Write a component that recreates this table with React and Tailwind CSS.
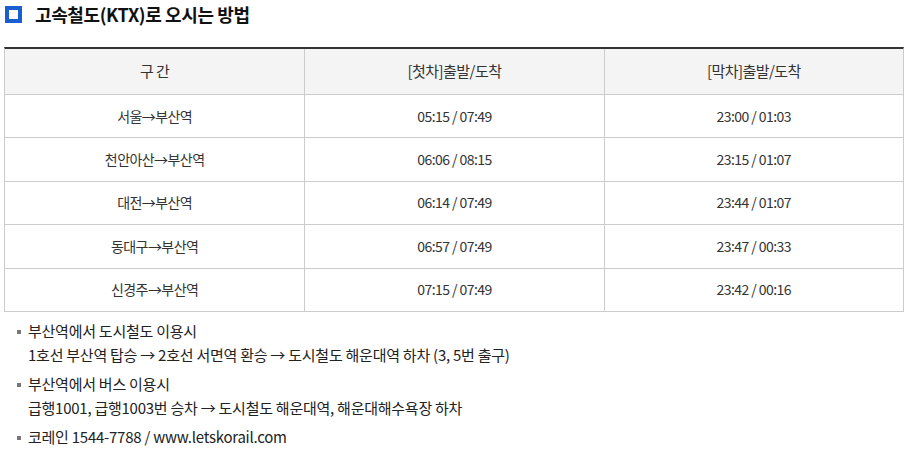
import React from "react"

const font = { fontFamily: '"Noto Sans CJK KR", "Noto Sans", sans-serif' }

const rows = [
  { route: "서울→부산역", first: "05:15 / 07:49", last: "23:00 / 01:03" },
  { route: "천안아산→부산역", first: "06:06 / 08:15", last: "23:15 / 01:07" },
  { route: "대전→부산역", first: "06:14 / 07:49", last: "23:44 / 01:07" },
  { route: "동대구→부산역", first: "06:57 / 07:49", last: "23:47 / 00:33" },
  { route: "신경주→부산역", first: "07:15 / 07:49", last: "23:42 / 00:16" },
]

const notes = [
  { title: "부산역에서 도시철도 이용시", desc: "1호선 부산역 탑승 → 2호선 서면역 환승 → 도시철도 해운대역 하차 (3, 5번 출구)" },
  { title: "부산역에서 버스 이용시", desc: "급행1001, 급행1003번 승차 → 도시철도 해운대역, 해운대해수욕장 하차" },
  { title: "코레인 1544-7788 / www.letskorail.com" },
]

export default function App() {
  return (
    <div className="w-[911px] h-[455px] bg-white text-[#333] overflow-hidden" style={font}>
      {/* title */}
      <div className="flex items-center h-[28px] pl-[5px]">
        <span className="w-[17px] h-[17px] border-[4px] border-[#1a5fd0] bg-white" />
        <h2 className="ml-[13px] text-[18px] font-bold text-[#111] tracking-[-0.4px]">
          고속철도(KTX)로 오시는 방법
        </h2>
      </div>

      {/* table */}
      <div className="ml-[4px] mt-[19px] w-[900px] border-t-2 border-[#333] border-l border-r border-l-[#ccc] border-r-[#ccc] text-[14px] tracking-[-0.04em]">
        <div className="grid grid-cols-3 h-[46px] bg-[#f4f4f4] border-b border-[#ccc] text-[15px]">
          <div className="flex items-center justify-center">구 간</div>
          <div className="flex items-center justify-center border-l border-[#ccc]">[첫차]출발/도착</div>
          <div className="flex items-center justify-center border-l border-[#ccc]">[막차]출발/도착</div>
        </div>
        {rows.map((r) => (
          <div key={r.route} className="grid grid-cols-3 h-[43.4px] border-b border-[#ccc]">
            <div className="flex items-center justify-center">{r.route}</div>
            <div className="flex items-center justify-center border-l border-[#ccc]">{r.first}</div>
            <div className="flex items-center justify-center border-l border-[#ccc]">{r.last}</div>
          </div>
        ))}
      </div>

      {/* notes */}
      <ul className="mt-[7px] pl-[17px] text-[15px] leading-[24px] text-[#222] tracking-[-0.25px]">
        {notes.map((n) => (
          <li key={n.title} className="flex items-start mb-[5px]">
            <span className="mt-[11px] w-[4px] h-[4px] bg-[#777] shrink-0" />
            <div className="ml-[7px]">
              <p>{n.title}</p>
              {n.desc && <p>{n.desc}</p>}
            </div>
          </li>
        ))}
      </ul>
    </div>
  )
}
